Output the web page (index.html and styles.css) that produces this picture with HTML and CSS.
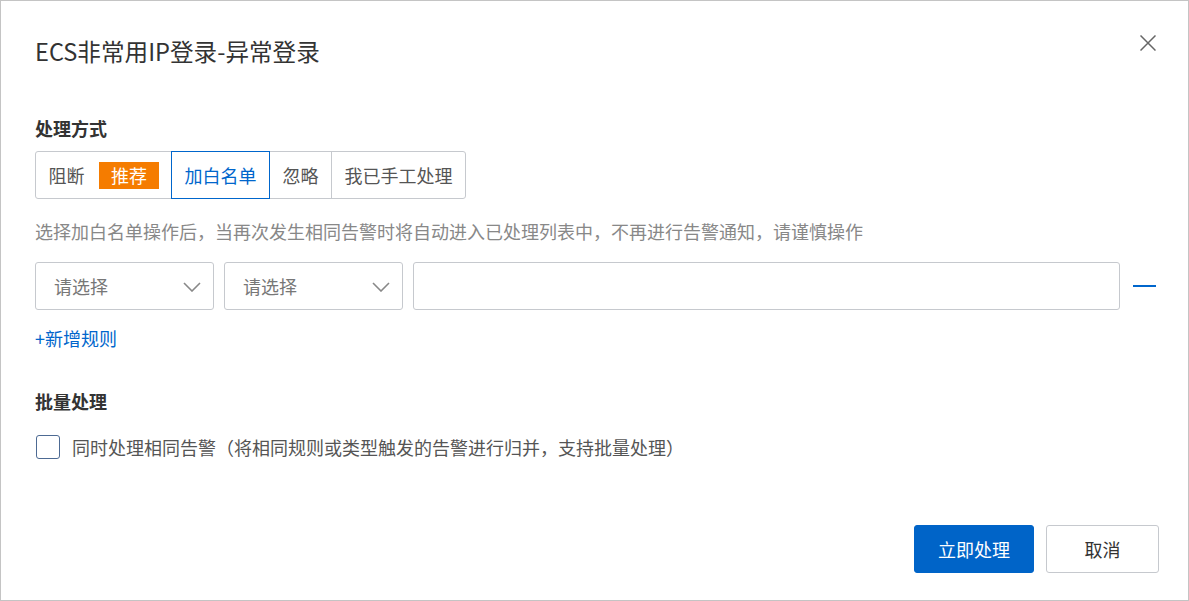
FILE: index.html
```html
<!DOCTYPE html>
<html lang="zh-CN">
<head>
<meta charset="utf-8">
<title>ECS非常用IP登录-异常登录</title>
<link rel="stylesheet" href="styles.css">
</head>
<body>
<div class="dialog">
  <div class="header">
    <div class="title">ECS非常用IP登录-异常登录</div>
    <svg class="close" width="16" height="16" viewBox="0 0 16 16"><path d="M0.5 0.5 L15.5 15.5 M15.5 0.5 L0.5 15.5" stroke="#666" stroke-width="1.5" fill="none"/></svg>
  </div>

  <div class="label first">处理方式</div>
  <div class="segments">
    <div class="seg">阻断<span class="badge">推荐</span></div>
    <div class="seg active">加白名单</div>
    <div class="seg">忽略</div>
    <div class="seg">我已手工处理</div>
  </div>
  <div class="desc">选择加白名单操作后，当再次发生相同告警时将自动进入已处理列表中，不再进行告警通知，请谨慎操作</div>

  <div class="rule-row">
    <div class="select"><span>请选择</span><svg width="18" height="10" viewBox="0 0 18 10"><path d="M1 1 L9 9 L17 1" stroke="#888" stroke-width="1.6" fill="none"/></svg></div>
    <div class="select"><span>请选择</span><svg width="18" height="10" viewBox="0 0 18 10"><path d="M1 1 L9 9 L17 1" stroke="#888" stroke-width="1.6" fill="none"/></svg></div>
    <div class="input"></div>
    <div class="minus"></div>
  </div>
  <div class="add-rule">+新增规则</div>

  <div class="label second">批量处理</div>
  <label class="check-row"><span class="checkbox"></span><span>同时处理相同告警（将相同规则或类型触发的告警进行归并，支持批量处理）</span></label>

  <div class="footer">
    <button class="btn primary">立即处理</button>
    <button class="btn">取消</button>
  </div>
</div>
</body>
</html>
```

FILE: styles.css
```css
* { box-sizing: border-box; }
html, body { margin: 0; padding: 0; background: #fff; }
body {
  font-family: "Noto Sans CJK SC", "Noto Sans", sans-serif;
  color: #333;
  font-size: 18px;
}
.dialog {
  width: 1189px;
  height: 601px;
  border: 1px solid #c4c4c4;
  padding: 0 29px 0 34px;
}
.header {
  display: flex;
  justify-content: space-between;
  align-items: flex-start;
  padding-top: 35px;
  height: 101px;
}
.title {
  font-size: 23.6px;
  line-height: 30px;
  color: #333;
}
.close { margin-top: -1px; margin-right: 3px; }
.label {
  font-weight: bold;
  font-size: 18px;
  line-height: 24px;
  color: #333;
}
.label.first { margin-top: 14px; }
.label.second { margin-top: 39px; }
.segments {
  display: flex;
  margin-top: 11px;
  height: 48px;
}
.seg {
  display: flex;
  align-items: center;
  height: 48px;
  padding: 0 12.5px;
  border: 1px solid #c6c9ce;
  margin-left: -1px;
  color: #555;
  line-height: 24px;
}
.seg:first-child { margin-left: 0; border-radius: 3px 0 0 3px; padding-right: 12px; }
.seg:last-child { border-radius: 0 3px 3px 0; }
.seg.active {
  border-color: #0066cc;
  color: #0066cc;
  position: relative;
  z-index: 1;
}
.badge {
  display: inline-flex;
  align-items: center;
  justify-content: center;
  width: 60px;
  height: 27px;
  margin-left: 14.5px;
  background: #f57c00;
  color: #fff;
}
.desc {
  margin-top: 20px;
  line-height: 24px;
  color: #888;
}
.rule-row {
  display: flex;
  align-items: center;
  margin-top: 19px;
  height: 48px;
}
.select {
  width: 179px;
  height: 48px;
  border: 1px solid #c6c9ce;
  border-radius: 3px;
  display: flex;
  align-items: center;
  justify-content: space-between;
  padding: 0 12px 0 18px;
  margin-right: 10px;
  color: #777;
}
.select svg { margin-top: 2px; }
.input {
  flex: 1;
  height: 48px;
  border: 1px solid #c6c9ce;
  border-radius: 3px;
}
.minus {
  width: 23px;
  height: 2px;
  background: #0066cc;
  margin: 0 3px 0 13px;
}
.add-rule {
  margin-top: 16px;
  line-height: 24px;
  color: #0066cc;
}
.check-row {
  display: flex;
  align-items: center;
  margin-top: 22px;
  height: 24px;
  color: #555;
}
.checkbox {
  width: 24px;
  height: 24px;
  border: 1px solid #4d6a93;
  border-radius: 3px;
  margin: 0 12px 0 1px;
}
.footer {
  display: flex;
  justify-content: flex-end;
  gap: 12px;
  margin-top: 66px;
}
.btn {
  height: 48px;
  width: 113px;
  border: 1px solid #c6c9ce;
  border-radius: 3px;
  background: #fff;
  font-family: inherit;
  font-size: 18px;
  color: #333;
  padding: 0;
}
.btn.primary {
  width: 120px;
  background: #0064c8;
  border-color: #0064c8;
  color: #fff;
}
```
